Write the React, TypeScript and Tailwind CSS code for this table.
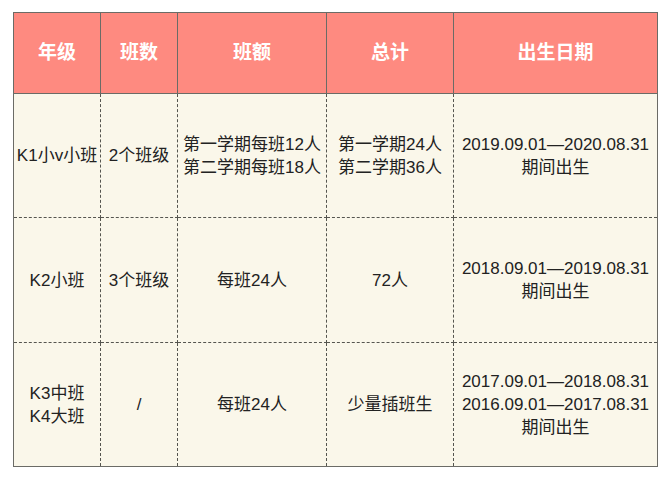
const headers = ['年级', '班数', '班额', '总计', '出生日期'];

const rows: string[][][] = [
    [['K1小v小班'], ['2个班级'], ['第一学期每班12人', '第二学期每班18人'], ['第一学期24人', '第二学期36人'], ['2019.09.01—2020.08.31', '期间出生']],
    [['K2小班'], ['3个班级'], ['每班24人'], ['72人'], ['2018.09.01—2019.08.31', '期间出生']],
    [['K3中班', 'K4大班'], ['/'], ['每班24人'], ['少量插班生'], ['2017.09.01—2018.08.31', '2016.09.01—2017.08.31', '期间出生']],
];

const widths = ['w-[87px]', 'w-[77px]', 'w-[149px]', 'w-[127px]', 'w-[204px]'];
const heights = ['h-[124px]', 'h-[125px]', 'h-[124px]'];

export default function App() {
    return (
        <div className="h-[482px] w-[672px] bg-white pl-[13px] pt-[12px]" style={{ fontFamily: '"Liberation Sans", "Noto Sans CJK SC", sans-serif' }}>
            <table className="table-fixed border-collapse border-[1.5px] border-[#6b6b66]">
                <thead>
                    <tr className="h-[81px] bg-[#fe8a80]">
                        {headers.map((h, i) => (
                            <th key={h} className={`${widths[i]} border border-solid border-[#6b6b66] p-0 text-center text-[19px] font-bold text-white`}>
                                {h}
                            </th>
                        ))}
                    </tr>
                </thead>
                <tbody className="bg-[#faf7ea]">
                    {rows.map((row, r) => (
                        <tr key={r} className={heights[r]}>
                            {row.map((cell, c) => (
                                <td key={c} className="border border-dashed border-[#55554f] p-0 text-center text-[17px] leading-[23px] text-[#222]">
                                    {cell.map((line) => (
                                        <div key={line} className="whitespace-nowrap">
                                            {line}
                                        </div>
                                    ))}
                                </td>
                            ))}
                        </tr>
                    ))}
                </tbody>
            </table>
        </div>
    );
}
